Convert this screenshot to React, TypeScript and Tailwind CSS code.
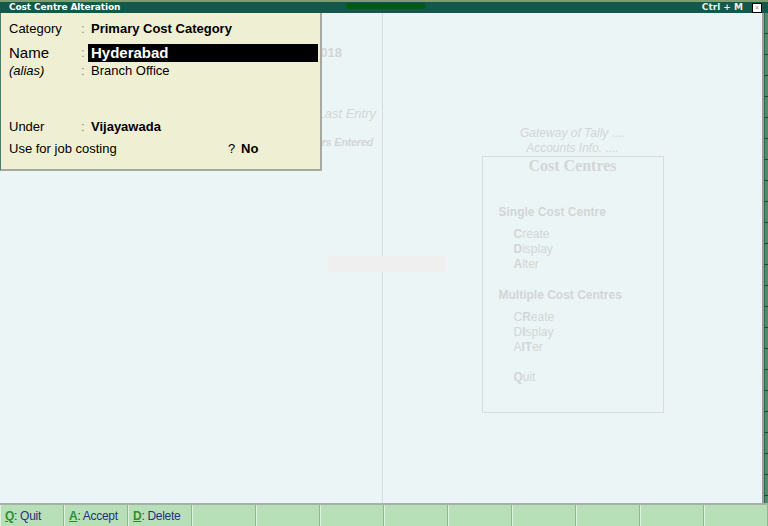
const ghost = "text-[#d3d6d6]";

const keys = [
  { k: "Q", label: ": Quit" },
  { k: "A", label: ": Accept" },
  { k: "D", label: ": Delete" },
];

function Menu({ parts }: { parts: [string, boolean][] }) {
  return (
    <div className="h-[15px] leading-[15px]">
      {parts.map(([t, b], i) => (
        <span key={i} className={b ? "font-bold" : ""}>
          {t}
        </span>
      ))}
    </div>
  );
}

function Popup() {
  return (
    <div className="absolute left-0 top-0 w-[322px] h-[158px] bg-[#efefd3] border-r-2 border-b-2 border-[#a8a8a0] border-l border-l-[#4a7a6a] pt-[7px] pl-[8px] text-[13px] text-black font-['Liberation_Sans',Arial,sans-serif]">
      <div className="flex items-center h-[18px]">
        <span className="w-[72px]">Category</span>
        <span className="w-[10px] text-[#888]">:</span>
        <span className="font-bold">Primary Cost Category</span>
      </div>
      <div className="flex items-center h-[18px] mt-[6px]">
        <span className="w-[72px] text-[15px]">Name</span>
        <span className="w-[7px] text-[#888]">:</span>
        <div className="w-[230px] h-[18px] bg-black text-white font-bold text-[15px] pl-[3px] leading-[18px]">Hyderabad</div>
      </div>
      <div className="flex items-center h-[18px]">
        <span className="w-[72px] italic">(alias)</span>
        <span className="w-[10px] text-[#888]">:</span>
        <span>Branch Office</span>
      </div>
      <div className="flex items-center h-[18px] mt-[38px]">
        <span className="w-[72px]">Under</span>
        <span className="w-[10px] text-[#888]">:</span>
        <span className="font-bold">Vijayawada</span>
      </div>
      <div className="flex items-center h-[18px] mt-[4px]">
        <span className="w-[219px]">Use for job costing</span>
        <span className="w-[13px]">?</span>
        <span className="font-bold">No</span>
      </div>
    </div>
  );
}

export default function App() {
  return (
    <div className="w-[768px] h-[526px] flex flex-col bg-[#ebf5f5] overflow-hidden font-['Liberation_Sans',Arial,sans-serif]">
      <div className="h-[2px] bg-[#7f9c72]" />
      <div className="h-[11px] bg-[#13584b] flex items-center relative">
        <span className="pl-[9px] text-white font-bold text-[9px] leading-[11px] font-['DejaVu_Sans',Verdana,sans-serif] tracking-[-0.1px]">
          Cost Centre Alteration
        </span>
        <div className="absolute left-[346px] top-[1px] w-[80px] h-[6px] rounded-full bg-[#005a10]" />
        <span className="ml-auto mr-[9px] text-[#e8f0ee] font-bold text-[9px] leading-[11px] font-['DejaVu_Sans',Verdana,sans-serif]">
          Ctrl + M
        </span>
        <div className="w-[10px] h-[10px] bg-white border border-black mr-[6px] flex items-center justify-center text-[7px] leading-none text-[#888]">
          ×
        </div>
      </div>
      <div className="flex flex-1 min-h-0">
        <div className="relative flex flex-1">
          <div className="w-[383px] border-r border-[#d8dede] flex flex-col items-end">
            <div className={`mt-[30px] mr-[40px] font-bold text-[13px] ${ghost} whitespace-nowrap`}>1-Apr-2017 to 31-Mar-2018</div>
            <div className={`mt-[41px] mr-[6px] italic text-[13px] ${ghost} whitespace-nowrap`}>Date of Last Entry</div>
            <div className={`mt-[11px] mr-[9px] italic font-bold text-[11px] tracking-[-0.3px] ${ghost} whitespace-nowrap`}>No Vouchers Entered</div>
            <div className="mt-[105px] mr-[-64px] w-[118px] h-[16px] bg-[#efefef]" />
          </div>
          <div className={`flex-1 flex flex-col items-center pt-[113px] ${ghost} text-[12px]`}>
            <div className="italic leading-[15px]">Gateway of Tally ....</div>
            <div className="italic leading-[15px]">Accounts Info. ....</div>
            <div className="w-[182px] h-[257px] border border-[#d8dcdc] flex flex-col">
              <div className="text-center font-bold text-[16px] leading-[18px] font-['Liberation_Serif',serif]">Cost Centres</div>
              <div className="pl-[16px] mt-[30px] font-bold leading-[15px]">Single Cost Centre</div>
              <div className="pl-[31px] mt-[7px]">
                <Menu parts={[["C", true], ["reate", false]]} />
                <Menu parts={[["D", true], ["isplay", false]]} />
                <Menu parts={[["A", true], ["lter", false]]} />
              </div>
              <div className="pl-[16px] mt-[16px] font-bold leading-[15px]">Multiple Cost Centres</div>
              <div className="pl-[31px] mt-[7px]">
                <Menu parts={[["C", false], ["R", true], ["eate", false]]} />
                <Menu parts={[["D", false], ["I", true], ["splay", false]]} />
                <Menu parts={[["A", false], ["lT", true], ["er", false]]} />
                <div className="mt-[15px]">
                  <Menu parts={[["Q", true], ["uit", false]]} />
                </div>
              </div>
            </div>
          </div>
          <Popup />
        </div>
        <div className="w-[2px] bg-[#9c9c9c]" />
        <div className="w-[4px] flex flex-col bg-[#4f8c6c]">
          {Array.from({ length: 24 }).map((_, i) => (
            <div key={i} className="h-[21px] shrink-0 border-b border-[#1c4a36] border-l border-l-[#2e6a4e]" />
          ))}
        </div>
      </div>
      <div className="h-[2px] bg-[#a8b0aa]" />
      <div className="h-[21px] flex bg-[#b8e0b8]">
        {Array.from({ length: 12 }).map((_, i) => (
          <div
            key={i}
            className={`${i === 11 ? "flex-1" : "w-[64px]"} h-full border-l border-l-[#dff2df] border-r border-r-[#8fb88f] flex items-center pl-[4px] text-[12px] text-[#27307a] tracking-[-0.3px] whitespace-nowrap`}
          >
            {keys[i] && (
              <>
                <span className="underline font-bold text-[#2f8f2f]">{keys[i].k}</span>
                <span>{keys[i].label}</span>
              </>
            )}
          </div>
        ))}
      </div>
    </div>
  );
}
